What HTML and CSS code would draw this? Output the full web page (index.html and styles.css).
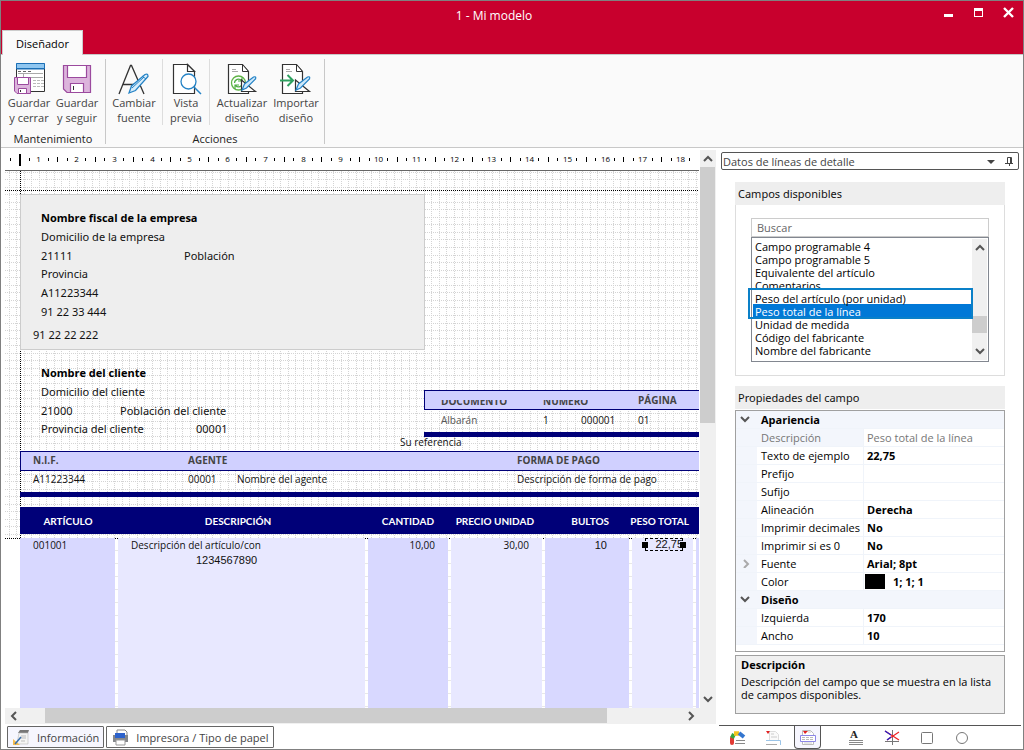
FILE: index.html
```html
<!DOCTYPE html>
<html lang="es">
<head>
<meta charset="utf-8">
<title>1 - Mi modelo</title>
<link rel="stylesheet" href="styles.css">
</head>
<body>
<div class="window">
  <header class="titlebar">
    <h1 class="title">1 - Mi modelo</h1>
    <div class="window-buttons">
      <button type="button" aria-label="Minimizar"><svg width="11" height="11"><path d="M1 7h9v3H1z" fill="#fff"/></svg></button>
      <button type="button" aria-label="Maximizar"><svg width="11" height="11"><path d="M1 1h9v9H1zM2 4v5h7V4z" fill="#fff" fill-rule="evenodd"/></svg></button>
      <button type="button" aria-label="Cerrar"><svg width="11" height="11"><path d="M1 1l9 9M10 1l-9 9" stroke="#fff" stroke-width="2.4"/></svg></button>
    </div>
  </header>
  <nav class="tabs"><button type="button" class="tab">Diseñador</button></nav>

  <section class="ribbon">
    <div class="group">
      <div class="tools">
        <button type="button" class="tool">
          <svg width="32" height="32" viewBox="0 0 32 32"><path d="M3.500.500h28v28h-28z" fill="#fff" stroke="#333"/><path d="M3 0h29v6H3z" fill="#8fc6f0"/><path d="M3.500 6V.500h28V6z" fill="none" stroke="#1b6fb5"/><path d="M3 5.500h29" stroke="#1b6fb5"/><path d="M5 8.500h3m2 0h3m2 0h3" stroke="#666"/><path d="M5 10.500h25M5 14.500h25M10.500 10v4" stroke="#aaa"/><path d="M20 17.500h11M20 20.500h11M20 23.500h11" stroke="#bbb" stroke-dasharray="3 1"/><path d="M1.500 14.500h16v16H4l-2.500-2.500z" fill="#dcb4dc" stroke="#9b4a9e"/><path d="M4.500 14.500h11v7h-11z" fill="#fff" stroke="#9b4a9e"/><path d="M5.500 25.500h8v5h-8z" fill="#fff" stroke="#9b4a9e"/><path d="M7.500 27v2" stroke="#333"/></svg>
          <span>Guardar<br>y cerrar</span></button>
        <button type="button" class="tool">
          <svg width="32" height="32" viewBox="0 0 32 32"><path d="M2.500 2.500h27v27H6L2.500 26z" fill="#dcb4dc" stroke="#9b4a9e" stroke-width="1.200"/><path d="M6.500 2.500h19v12h-19z" fill="#fff" stroke="#9b4a9e" stroke-width="1.200"/><path d="M9.500 20.500h13v9h-13z" fill="#fff" stroke="#9b4a9e" stroke-width="1.200"/><path d="M12.500 23v4" stroke="#333"/></svg>
          <span>Guardar<br>y seguir</span></button>
      </div>
      <div class="caption">Mantenimiento</div>
    </div>
    <div class="group actions">
      <div class="tools">
        <button type="button" class="tool">
          <svg width="32" height="32" viewBox="0 0 32 32"><path d="M1 31L12.500 2.500h1L26 31M5 21.500h14" fill="none" stroke="#333" stroke-width="1.300"/><path d="M11 30l2.500-7L27 11.500q3-1.500 3 2L17.500 27.500z" fill="#d8edfb" stroke="#2583c6" stroke-width="1.300"/><path d="M14 25l12-11M24 13l4 3" stroke="#2583c6"/></svg>
          <span>Cambiar<br>fuente</span></button>
        <button type="button" class="tool">
          <svg width="32" height="32" viewBox="0 0 32 32"><path d="M3.500 1.500h14l7 7v22h-21z" fill="#fff" stroke="#333" stroke-width="1.200"/><path d="M17.500 1.500v7h7z" fill="#fff" stroke="#333" stroke-width="1.200"/><circle cx="18.500" cy="18.500" r="7.500" fill="#fff" stroke="#2583c6" stroke-width="1.300"/><path d="M24 24l7 7" stroke="#2583c6" stroke-width="1.500"/></svg>
          <span>Vista<br>previa</span></button>
        <button type="button" class="tool">
          <svg width="32" height="32" viewBox="0 0 32 32"><path d="M2.500 1.500h14l6 7v22h-20z" fill="#fff" stroke="#333" stroke-width="1.200"/><path d="M16.500 1.500v7h6z" fill="#fff" stroke="#333"/><path d="M6 6.500h4M6 8.500h6" stroke="#aaa"/><circle cx="12.500" cy="20" r="7" fill="#fff" stroke="#5fb446" stroke-width="1.300"/><path d="M8.500 20a4 4 0 0 1 7-2.500M16.500 20a4 4 0 0 1-7 2.500M16 14.500v3.500h-4M9 26v-4h4" fill="none" stroke="#4fae42" stroke-width="1.200"/><path d="M15.500 17v11.500h14z" fill="#fff" stroke="#333" stroke-width="1.200"/><path d="M16 27l2.500-6 9-7q3-1 2 2l-9 9z" fill="#cfe9fa" stroke="#2583c6" stroke-width="1.200"/></svg>
          <span>Actualizar<br>diseño</span></button>
        <button type="button" class="tool">
          <svg width="32" height="32" viewBox="0 0 32 32"><path d="M2.500 1.500h14l6 7v22h-20z" fill="#fff" stroke="#333" stroke-width="1.200"/><path d="M16.500 1.500v7h6z" fill="#fff" stroke="#333"/><path d="M6 6.500h4M6 8.500h6" stroke="#aaa"/><path d="M0 17.500h13M7.500 12l5.500 5.500L7.500 23" fill="none" stroke="#2ea160" stroke-width="2"/><path d="M15.500 17v11.500h14z" fill="#fff" stroke="#333" stroke-width="1.200"/><path d="M16 27l2.500-6 9-7q3-1 2 2l-9 9z" fill="#cfe9fa" stroke="#2583c6" stroke-width="1.200"/></svg>
          <span>Importar<br>diseño</span></button>
      </div>
      <div class="caption">Acciones</div>
    </div>
  </section>

  <main class="workspace">
    <section class="designer">
      <div class="ruler"><svg id="ruler" width="100%" height="21"></svg></div>
      <div class="vscroll">
        <svg class="arrow" width="15" height="17"><path d="M4 11l4-4 4 4" /></svg>
        <div class="vthumb"></div>
        <svg class="arrow push-down" width="15" height="17"><path d="M4 6l4 4 4-4" /></svg>
      </div>
      <div class="surface">
        <svg id="grid" class="grid"></svg>
        <div class="company-box"></div>
        <b class="f big f1">Nombre fiscal de la empresa</b>
        <span class="f big f2">Domicilio de la empresa</span>
        <span class="f big f3">21111</span>
        <span class="f big f4">Población</span>
        <span class="f big f5">Provincia</span>
        <span class="f big f6">A11223344</span>
        <span class="f big f7">91 22 33 444</span>
        <span class="f big f8">91 22 22 222</span>
        <b class="f big f9">Nombre del cliente</b>
        <span class="f big f10">Domicilio del cliente</span>
        <span class="f big f11">21000</span>
        <span class="f big f12">Población del cliente</span>
        <span class="f big f13">Provincia del cliente</span>
        <span class="f big f14">00001</span>

        <div class="band doc-band"></div>
        <b class="f clipped f15"><span>DOCUMENTO</span></b>
        <b class="f clipped f16"><span>NÚMERO</span></b>
        <b class="f label f17">PÁGINA</b>
        <span class="f soft f18">Albarán</span>
        <span class="f f19">1</span>
        <span class="f f20">000001</span>
        <span class="f f21">01</span>
        <div class="bar doc-bar"></div>
        <span class="f f22">Su referencia</span>

        <div class="band client-band"></div>
        <b class="f label f23">N.I.F.</b>
        <b class="f label f24">AGENTE</b>
        <b class="f label f25">FORMA DE PAGO</b>
        <span class="f f26">A11223344</span>
        <span class="f f27">00001</span>
        <span class="f f28">Nombre del agente</span>
        <span class="f f29">Descripción de forma de pago</span>
        <div class="bar client-bar"></div>

        <div class="lines-head">
          <b>ARTÍCULO</b><b>DESCRIPCIÓN</b><b class="end">CANTIDAD</b><b class="end">PRECIO UNIDAD</b><b class="end">BULTOS</b><b class="end">PESO TOTAL</b>
        </div>
        <div class="detail">
          <div class="col"><p>001001</p></div>
          <div class="col light desc"><p>Descripción del artículo/con</p><p class="arial">1234567890</p></div>
          <div class="col right"><p>10,00</p></div>
          <div class="col light right"><p>30,00</p></div>
          <div class="col right"><p class="arial">10</p></div>
          <div class="col light"></div>
          <div class="col"></div>
        </div>
        <div class="selected arial"><i></i>22,75<i></i></div>
      </div>
      <div class="hscroll">
        <svg class="arrow" width="17" height="15"><path d="M11 4L7 8l4 4"/></svg>
        <div class="hthumb"></div>
        <svg class="arrow push-right" width="17" height="15"><path d="M7 4l4 4-4 4"/></svg>
      </div>
      <div class="sheet-tabs">
        <button type="button" class="sheet current"><svg width="17" height="17" viewBox="0 0 17 17"><path d="M7 1h9l-1 3H5z" fill="#777"/><path d="M6 4h9v11H4z" fill="#f4f4f4" stroke="#bbb" stroke-width=".6"/><path d="M8 7h5M7 9h6M8 12h4" stroke="#bbb"/><path d="M0 10l7 6H0z" fill="#f5bd4f"/><path d="M2 15l6-7" stroke="#3a70ac" stroke-width="1.500"/></svg>Información</button>
        <button type="button" class="sheet"><svg width="17" height="17" viewBox="0 0 17 17"><path d="M5 5V1h8l2 2v3" fill="#fff" stroke="#888"/><path d="M1 6h15v7H1z" fill="#85878b"/><path d="M3 4h10v5H3z" fill="#2c62cc"/><path d="M4 11h9v5H4z" fill="#fff" stroke="#999"/></svg>Impresora / Tipo de papel</button>
      </div>
    </section>

    <aside class="panel">
      <div class="panel-title"><span>Datos de líneas de detalle</span>
        <button type="button" aria-label="Menú"><svg width="9" height="9"><path d="M1 3h8L5 7z" fill="#444"/></svg></button>
        <button type="button" aria-label="Fijar"><svg width="9" height="9"><path d="M2.500 6V.500h4V6M0 6.500h8M4.500 6v3M5.500 1v5" fill="none" stroke="#444"/></svg></button>
      </div>
      <div class="panel-body">
        <section class="fields">
          <h2>Campos disponibles</h2>
          <div class="fields-body">
            <input type="search" placeholder="Buscar" aria-label="Buscar">
            <div class="listbox">
              <div class="list-clip">
              <select size="10" aria-label="Campos disponibles">
                <option>Campo programable 4</option><option>Campo programable 5</option><option>Equivalente del artículo</option><option>Comentarios</option><option>Peso del artículo (por unidad)</option><option selected>Peso total de la línea</option><option>Unidad de medida</option><option>Código del fabricante</option><option>Nombre del fabricante</option><option>Garantía</option>
              </select>
              </div>
              <div class="list-scroll">
                <svg class="arrow" width="15" height="17"><path d="M4 11l4-4 4 4"/></svg>
                <div class="list-thumb"></div>
                <svg class="arrow" width="15" height="17"><path d="M4 6l4 4 4-4"/></svg>
              </div>
              <div class="highlight"></div>
            </div>
          </div>
        </section>
        <section class="props">
          <h2>Propiedades del campo</h2>
          <div class="table-box">
          <table>
            <colgroup><col class="gutter"><col class="name"><col></colgroup>
            <tr class="cat"><td><svg class="arrow" width="11" height="9"><path d="M1 2l4 4 4-4"/></svg></td><th colspan="2">Apariencia</th></tr>
            <tr class="readonly"><td></td><th>Descripción</th><td>Peso total de la línea</td></tr>
            <tr><td></td><th>Texto de ejemplo</th><td>22,75</td></tr>
            <tr><td></td><th>Prefijo</th><td></td></tr>
            <tr><td></td><th>Sufijo</th><td></td></tr>
            <tr><td></td><th>Alineación</th><td>Derecha</td></tr>
            <tr><td></td><th>Imprimir decimales</th><td>No</td></tr>
            <tr><td></td><th>Imprimir si es 0</th><td>No</td></tr>
            <tr><td><svg class="arrow pale" width="11" height="9"><path d="M4 1l4 4-4 4"/></svg></td><th>Fuente</th><td>Arial; 8pt</td></tr>
            <tr><td></td><th>Color</th><td class="colour"><div><span class="swatch"></span>1; 1; 1</div></td></tr>
            <tr class="cat"><td><svg class="arrow" width="11" height="9"><path d="M1 2l4 4 4-4"/></svg></td><th colspan="2">Diseño</th></tr>
            <tr><td></td><th>Izquierda</th><td>170</td></tr>
            <tr><td></td><th>Ancho</th><td>10</td></tr>
          </table>
          </div>
          <div class="help"><b>Descripción</b><p>Descripción del campo que se muestra en la lista de campos disponibles.</p></div>
        </section>
      </div>
      <nav class="object-tabs">
        <button type="button" aria-label="Estilos"><svg width="17" height="17" viewBox="0 0 17 17"><path d="M3 14V9" stroke="#e23b35" stroke-width="4" stroke-linecap="round"/><path d="M3 9L5 5" stroke="#35a540" stroke-width="4"/><path d="M5 4.500h5" stroke="#f2c51f" stroke-width="4.500"/><path d="M10 4l5 4" stroke="#3476cf" stroke-width="4"/><path d="M7 11.500h9M6 14.500h10" stroke="#888"/></svg></button>
        <button type="button" aria-label="Cabecera"><svg width="17" height="17" viewBox="0 0 17 17"><path d="M5.500 2.500h6l3 3v6h-9z" fill="#fafafa" stroke="#ddd"/><path d="M2 2h4L4 5z" fill="#e02020"/><path d="M7 5h3M7 8h6" stroke="#ccc"/><path d="M2 11.500h14.500V16" fill="none" stroke="#9cc5e8"/><path d="M2 15.500h11" stroke="#aaa"/></svg></button>
        <button type="button" aria-label="Líneas" class="current"><svg width="17" height="17" viewBox="0 0 17 17"><path d="M3.500 1.500h8l3 3v11h-11z" fill="#fff" stroke="#bbb"/><path d="M4 2h5L6 5z" fill="#e02020"/><path d="M9 3h3M5 14h8" stroke="#ccc"/><path d="M1.500 6.500h15v6h-15z" fill="#fff" stroke="#8c86e8"/><path d="M3 8.500h12M3 10.500h12" stroke="#bbb" stroke-dasharray="3 1"/></svg></button>
        <button type="button" aria-label="Texto" class="gap-before"><svg width="17" height="17" viewBox="0 0 17 17"><text x="2" y="9" class="letter">A</text><path d="M1 11.500h14M1 13.500h14M1 15.500h14" stroke="#888"/></svg></button>
        <button type="button" aria-label="Línea"><svg width="17" height="17" viewBox="0 0 17 17"><path d="M2 12.500h14M9.500 1v15" stroke="#777"/><path d="M2 2l14 9" stroke="#e22" stroke-width="1.200"/><path d="M4 11l12-8" stroke="#e22" stroke-width="1.200"/><path d="M2 2l6 4M4 11l4-3" stroke="#22c" stroke-width="1.200"/></svg></button>
        <button type="button" aria-label="Rectángulo"><svg width="17" height="17"><rect x="3.500" y="3.500" width="11" height="11" rx="1" fill="none" stroke="#777"/></svg></button>
        <button type="button" aria-label="Elipse"><svg width="17" height="17"><circle cx="9" cy="9" r="5.500" fill="none" stroke="#777"/></svg></button>
      </nav>
    </aside>
  </main>
</div>
<script src="designer.js"></script>
</body>
</html>
```
FILE: styles.css
```css
* { box-sizing: border-box; }
body { margin: 0; font: 11px/15px "Open Sans", "Noto Sans", sans-serif; color: #111; }
button { font: inherit; color: inherit; background: none; border: 0; padding: 0; margin: 0; }
h1, h2, p { margin: 0; font: inherit; }
svg { display: block; flex: none; }

.window { display: flex; flex-direction: column; min-height: 100vh; border: 1px solid #808080; background: #fff; }
.titlebar { display: flex; height: 29px; background: #c8002d; color: #fff; }
.title { flex: 1; padding-left: 44px; text-align: center; line-height: 30px; font-size: 12px; }
.window-buttons { display: flex; gap: 19px; align-items: flex-start; padding: 6px 9px 0 0; }
.tabs { display: flex; background: #c8002d; padding-left: 1px; border-bottom: 1px solid #c8c8c8; height: 25px; }
.tab { width: 81px; height: 25px; background: #fafafa; border: 1px solid #ccc; border-bottom: 0; color: #000; }

.ribbon { display: flex; height: 93px; background: #fafafa; border-bottom: 1px solid #c8c8c8; padding: 4px 0 3px; color: #444; }
.group { display: flex; flex-direction: column; justify-content: space-between; width: 105px; border-right: 1px solid #c8c8c8; }
.group.actions { width: 219px; }
.tools { display: flex; }
.group:first-child .tools { padding-left: 4px; }
.tool { display: flex; flex-direction: column; align-items: center; width: 48px; padding-top: 4px; }
.actions .tool { width: 57px; border-right: 1px solid #ddd; }
.actions .tool:nth-child(2) { width: 47px; }
.actions .tool:nth-child(3) { width: 64px; border: 0; }
.actions .tool:nth-child(4) { width: 44px; border: 0; }
.caption { text-align: center; color: #222; line-height: 10px; }

.workspace { display: flex; flex: 1; }
.designer { flex: 1; min-width: 0; display: grid; grid-template-columns: 1fr 16px; grid-template-rows: 22px 1fr 16px 25px; padding: 1px 0 0 4px; }
.ruler { border-bottom: 1px solid #666; overflow: hidden; margin-right: 1px; }
.ruler text { font: 8px "Open Sans", sans-serif; text-anchor: middle; }
.vscroll { grid-column: 2; grid-row: 1 / 3; display: flex; flex-direction: column; background: #f0f0f0; margin-top: 1px; }
.vthumb { height: 256px; width: 15px; background: #cdcdcd; }
.push-down { margin-top: auto; }
.hscroll { grid-column: 1 / 3; display: flex; background: #f0f0f0; padding-right: 17px; }
.hthumb { width: 81%; height: 15px; margin-left: 23px; background: #cdcdcd; }
.push-right { margin-left: auto; }
.arrow path { fill: none; stroke: #555; stroke-width: 2; }
.pale path { stroke: #aaa; }
.sheet-tabs { grid-column: 1 / 3; display: flex; gap: 2px; padding: 2px 0 0 2px; }
.sheet { display: flex; align-items: center; gap: 7px; height: 22px; padding: 0 4px 0 5px; border: 1px solid #666; border-radius: 1px; background: #fff; color: #444; white-space: nowrap; }
.sheet.current { background: #f6f6fe; }

/* Free canvas: report objects sit at their design coordinates */
.surface { position: relative; overflow: hidden; margin-right: 1px; color: #111; }
.grid { position: absolute; width: 100%; height: 368px; }
.f { position: absolute; font-size: 10px; line-height: 14px; white-space: nowrap; }
.big { font-size: 11px; color: #111; }
span.big { font-family: "Noto Sans", sans-serif; }
b.big { color: #000; }
.label, .clipped { color: #444; }
.soft { color: #555; }
.clipped { display: flex; align-items: flex-end; height: 8px; overflow: hidden; }
.company-box { position: absolute; left: 15px; top: 23px; width: 405px; height: 156px; background: #eee; border: 1px solid #ccc; }
.f1 { left: 36px; top: 40px; }
.f2 { left: 36px; top: 59px; }
.f3 { left: 36px; top: 78px; }
.f4 { left: 179px; top: 78px; }
.f5 { left: 36px; top: 96px; }
.f6 { left: 36px; top: 115px; }
.f7 { left: 36px; top: 134px; }
.f8 { left: 28px; top: 157px; }
.f9 { left: 36px; top: 195px; }
.f10 { left: 36px; top: 214px; }
.f11 { left: 36px; top: 233px; }
.f12 { left: 115px; top: 233px; }
.f13 { left: 36px; top: 251px; }
.f14 { left: 191px; top: 251px; }
.f15 { left: 436px; top: 229px; }
.f16 { left: 538px; top: 229px; }
.f17 { left: 633px; top: 222px; }
.f18 { left: 436px; top: 242px; }
.f19 { left: 538px; top: 242px; }
.f20 { left: 576px; top: 242px; }
.f21 { left: 633px; top: 242px; }
.f22 { left: 395px; top: 264px; }
.f23 { left: 28px; top: 282px; }
.f24 { left: 183px; top: 282px; }
.f25 { left: 512px; top: 282px; }
.f26 { left: 28px; top: 301px; }
.f27 { left: 183px; top: 301px; }
.f28 { left: 232px; top: 301px; }
.f29 { left: 512px; top: 301px; }
.band { position: absolute; right: 0; height: 20px; background: #d0d0ff; border: 1px solid #000078; border-right: 0; }
.bar { position: absolute; right: 0; height: 5px; background: #000078; }
.doc-band { left: 419px; top: 219px; }
.doc-bar { left: 419px; top: 261px; }
.client-band { left: 15px; top: 280px; }
.client-bar { left: 15px; top: 321px; }
.lines-head { position: absolute; left: 15px; right: 0; top: 336px; height: 27px; padding-top: 1px; background: #000078; color: #fff; display: grid; grid-template-columns: 96px 244px 74px 100px 75px 80px; align-items: center; text-align: center; font: 10px/15px Lato, "Open Sans", sans-serif; }
.lines-head .end { text-align: right; }
.detail { position: absolute; left: 15px; right: 0; top: 367px; bottom: 0; display: grid; grid-template-columns: 95px 247px 80px 91px 84px 61px 1fr; gap: 3px; font-size: 10px; line-height: 15px; background: repeating-linear-gradient(transparent 0 12px, #e8e8e8 12px 13px); }
.col { background: #d8d8ff; padding: 0 13px; }
.light { background: #e8e8ff; }
.right { text-align: right; }
.col.right:nth-child(5) { padding-right: 22px; }
.desc .arial { padding-left: 65px; }
.arial { font: 11px/15px "Liberation Sans", sans-serif; }
.selected { position: absolute; left: 640px; top: 367px; width: 38px; height: 13px; line-height: 13px; display: flex; align-items: center; outline: 1px dashed #000; outline-offset: -1px; }
.selected i { width: 6px; height: 6px; background: #000; margin: 0 -3px; z-index: 1; }
.selected i:first-child { margin-right: auto; }

.panel { width: 307px; display: flex; flex-direction: column; padding: 4px 2px 0 2px; border-left: 1px solid #fff; }
.panel-title { display: flex; align-items: center; gap: 10px; height: 18px; margin: 0 2px; padding: 0 4px 0 1px; border: 1px solid #555; border-radius: 2px; color: #444; }
.panel-title span { flex: 1; }
.panel-body { padding: 12px 16px 0 16px; flex: 1; display: flex; flex-direction: column; gap: 10px; }
.panel h2 { background: #eee; height: 23px; line-height: 23px; padding-left: 3px; font-family: "Noto Sans", sans-serif; color: #111; }
.fields-body { border: 1px solid #ddd; border-top: 0; padding: 13px 15px; height: 171px; }
.fields-body input { display: block; width: 100%; height: 19px; border: 1px solid #ccc; padding: 0 5px; font: inherit; border-radius: 0; outline: 0; appearance: none; }
.fields-body input::placeholder { color: #666; }
.listbox { position: relative; display: flex; height: 125px; border: 1px solid #828790; padding: 1px 1px 1px; }
.list-clip { flex: 1; min-width: 0; overflow: hidden; }
.listbox select { display: block; width: 100%; border: 0; border-radius: 0; padding: 0; margin: 0; font: inherit; overflow: hidden; outline: 0; background: #fff; color: #000; height: 134px; }
.listbox option { height: 13px; min-height: 13px; line-height: 13px; padding: 0 2px; font-size: 11px; }
.listbox option:checked { background: #0078d7 linear-gradient(#0078d7, #0078d7); color: #fff; -webkit-text-fill-color: #fff; }
.list-scroll { width: 15px; display: flex; flex-direction: column; background: #f0f0f0; }
.list-thumb { height: 17px; background: #cdcdcd; margin: auto 0 10px; }
.highlight { position: absolute; left: -4px; right: 15px; top: 50px; height: 31px; border: 2px solid #0a80c8; pointer-events: none; }
.table-box { border: 1px solid #a0a0a0; height: 242px; margin-top: 1px; }
table { width: 100%; table-layout: fixed; border-collapse: separate; border-spacing: 0; color: #000; line-height: 17px; }
.gutter { width: 21px; }
.name { width: 106px; }
td, th { height: 18px; padding: 0 0 0 4px; text-align: left; font-weight: 400; border-bottom: 1px solid #f0f4fa; white-space: nowrap; }
td:last-child { font-weight: 700; border-left: 1px solid #f0f4fa; padding-left: 3px; }
td:first-child { background: #f3f6fc; padding-left: 4px; }
.cat th { font-weight: 700; background: #f3f6fc; }
.readonly th { background: #f3f6fc; color: #777; }
.readonly td:last-child { font-weight: 400; color: #777; }
td.colour:last-child { padding-left: 1px; }
.colour div { display: flex; align-items: center; gap: 8px; }
.swatch { width: 20px; height: 15px; background: #000; }
.help { margin-top: 3px; height: 59px; border: 1px solid #a0a0a0; background: #f0f0f0; padding: 1px 5px; color: #000; line-height: 13px; }
.help b { display: block; line-height: 16px; margin-bottom: 2px; }
.object-tabs { display: flex; border-top: 1px solid #555; height: 24px; padding-left: 5px; }
.object-tabs button { width: 27px; height: 23px; margin-right: 8px; display: flex; justify-content: center; padding-top: 3px; }
.object-tabs .current { background: #f6f6fe; border: 1px solid #555; border-top: 0; border-radius: 0 0 4px 4px; }
.object-tabs .gap-before { margin-left: 14px; }
.letter { font: bold 11px "Liberation Serif", serif; fill: #222; }
```
FILE: designer.js
```javascript
const NS = "http://www.w3.org/2000/svg";
const CM = 37.75;
const ORIGIN = -4;

function add(parent, name, attrs, text) {
  const node = document.createElementNS(NS, name);
  for (const key in attrs) node.setAttribute(key, attrs[key]);
  if (text) node.textContent = text;
  parent.appendChild(node);
}

function drawRuler() {
  const ruler = document.getElementById("ruler");
  const width = ruler.parentElement.clientWidth;
  ruler.replaceChildren();
  for (let i = 1; ORIGIN + i * CM / 4 < width - 6; i++) {
    const x = Math.floor(ORIGIN + i * CM / 4) + 0.5;
    if (i === 2) add(ruler, "path", { d: "M15 5v12", stroke: "#000", "stroke-width": 2 });
    else if (i % 4 === 0) add(ruler, "text", { x: x, y: 13 }, String(i / 4));
    else add(ruler, "path", { d: i % 2 ? `M${x} 9v3` : `M${x} 8v5`, stroke: "#000" });
  }
}

function drawGrid() {
  const grid = document.getElementById("grid");
  const width = grid.parentElement.clientWidth;
  const dots = { stroke: "#d4d4d4", "stroke-dasharray": "1 1" };
  grid.replaceChildren();
  for (let i = 1; ORIGIN + i * CM / 5 < width; i++) {
    const x = Math.round(ORIGIN + i * CM / 5) + 0.5;
    add(grid, "path", { d: `M${x} 0V367`, ...dots });
  }
  for (let i = 0; i < 49; i++) {
    const y = Math.round(0.5 + i * CM / 5) + 0.5;
    add(grid, "path", { d: `M0 ${y}H${width}`, ...dots });
  }
  add(grid, "path", { d: `M15.5 0V367M0 19.5H${width}M0 367.5H${width}`, stroke: "#000", "stroke-dasharray": "1 1" });
}

function draw() {
  drawRuler();
  drawGrid();
}

draw();
window.addEventListener("resize", draw);
```
